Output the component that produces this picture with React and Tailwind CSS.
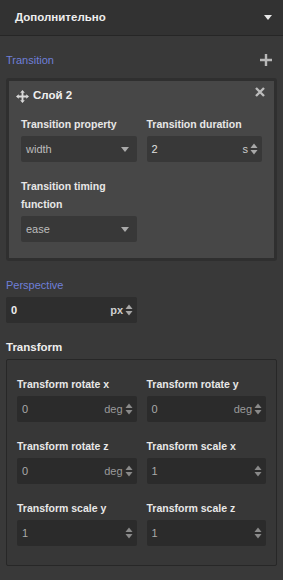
import React from "react";

function Spin({ dim }) {
  return (
    <svg width="8" height="12" viewBox="0 0 8 12" className={dim ? "text-[#8a8a8a]" : "text-[#a8a8a8]"}>
      <path d="M4 0.5 L7.5 5 L0.5 5 Z" fill="currentColor" />
      <path d="M4 11.5 L7.5 7 L0.5 7 Z" fill="currentColor" />
    </svg>
  );
}

function Caret({ color = "text-[#aaaaaa]" }) {
  return (
    <svg width="8" height="5" viewBox="0 0 8 5" className={color}>
      <path d="M0 0 L8 0 L4 5 Z" fill="currentColor" />
    </svg>
  );
}

function Field({ label, value, unit }) {
  return (
    <div className="flex flex-col">
      <div className="text-[10.5px] font-bold text-[#e8e8e8] leading-[18px] mb-[3px]">{label}</div>
      <div className="h-[26px] bg-[#2b2b2b] rounded-[2px] flex items-center pl-[5px] pr-[4px]">
        <span className="flex-1 text-[11px] text-[#a9a9a9]">{value}</span>
        {unit && <span className="text-[11px] text-[#9a9a9a] mr-[2px]">{unit}</span>}
        <Spin dim />
      </div>
    </div>
  );
}

export default function App() {
  return (
    <div
      className="w-[283px] h-[580px] bg-[#393939] text-[#e6e6e6] overflow-hidden"
      style={{ fontFamily: '"Liberation Sans", Arial, sans-serif' }}
    >
      <div className="h-[36px] bg-[#323232] border-b border-[#262626] flex items-center justify-between pl-[15px] pr-[11px]">
        <span className="text-[11.5px] font-bold text-[#eeeeee]">Дополнительно</span>
        <Caret color="text-[#e8e8e8]" />
      </div>

      <div className="px-[6px]">
        <div className="flex items-center justify-between h-[20px] mt-[14px] mb-[8px]">
          <span className="text-[11px] text-[#6f7fd8]">Transition</span>
          <svg width="12" height="12" viewBox="0 0 12 12" className="mr-[5px]">
            <path d="M6 0 V12 M0 6 H12" stroke="#b8b8b8" strokeWidth="2.4" />
          </svg>
        </div>

        <div className="border-[3px] border-[#2f2f2f] rounded-[3px] bg-[#474747] px-[12px] pt-[4px] pb-[16px]">
          <div className="flex items-center justify-between h-[22px]">
            <div className="flex items-center gap-[4px] -ml-[5px]">
              <svg width="13" height="13" viewBox="0 0 14 14" className="text-[#dcdcdc]">
                <path d="M7 0 L9.5 3 L4.5 3 Z M7 14 L9.5 11 L4.5 11 Z M0 7 L3 4.5 L3 9.5 Z M14 7 L11 4.5 L11 9.5 Z" fill="currentColor" />
                <path d="M7 2.5 V11.5 M2.5 7 H11.5" stroke="currentColor" strokeWidth="2" />
              </svg>
              <span className="text-[11.5px] font-bold text-[#f0f0f0]">Слой 2</span>
            </div>
            <svg width="10" height="10" viewBox="0 0 10 10" className="-mt-[8px] -mr-[3px]">
              <path d="M1 1 L9 9 M9 1 L1 9" stroke="#bdbdbd" strokeWidth="2.4" />
            </svg>
          </div>

          <div className="grid grid-cols-2 gap-x-[10px] mt-[8px]">
            <div className="flex flex-col">
              <div className="text-[10.5px] font-bold text-[#e8e8e8] leading-[18px] mb-[3px]">Transition property</div>
              <div className="h-[26px] bg-[#383838] rounded-[2px] flex items-center pl-[5px] pr-[8px]">
                <span className="flex-1 text-[11px] text-[#bdbdbd]">width</span>
                <Caret />
              </div>
            </div>
            <div className="flex flex-col">
              <div className="text-[10.5px] font-bold text-[#e8e8e8] leading-[18px] mb-[3px]">Transition duration</div>
              <div className="h-[26px] bg-[#383838] rounded-[2px] flex items-center pl-[5px] pr-[4px]">
                <span className="flex-1 text-[11px] text-[#e0e0e0]">2</span>
                <span className="text-[11px] text-[#cccccc] mr-[2px]">s</span>
                <Spin />
              </div>
            </div>
          </div>

          <div className="w-[116px] mt-[15px]">
            <div className="text-[10.5px] font-bold text-[#e8e8e8] leading-[18px] mb-[3px]">Transition timing function</div>
            <div className="h-[26px] bg-[#383838] rounded-[2px] flex items-center pl-[5px] pr-[8px]">
              <span className="flex-1 text-[11px] text-[#bdbdbd]">ease</span>
              <Caret />
            </div>
          </div>
        </div>

        <div className="text-[11px] text-[#6f7fd8] mt-[15px] leading-[18px]">Perspective</div>
        <div className="w-[131px] h-[26px] bg-[#2e2e2e] rounded-[2px] flex items-center pl-[5px] pr-[4px] mt-[3px]">
          <span className="flex-1 text-[11px] font-bold text-[#eeeeee]">0</span>
          <span className="text-[11px] font-bold text-[#d0d0d0] mr-[2px]">px</span>
          <Spin />
        </div>

        <div className="text-[11.5px] font-bold text-[#eeeeee] mt-[15px] leading-[18px]">Transform</div>
        <div className="mt-[3px] border border-[#272727] rounded-[2px] bg-[#373737] px-[10px] pt-[15px] pb-[19px] grid grid-cols-2 gap-x-[10px] gap-y-[15px]">
          <Field label="Transform rotate x" value="0" unit="deg" />
          <Field label="Transform rotate y" value="0" unit="deg" />
          <Field label="Transform rotate z" value="0" unit="deg" />
          <Field label="Transform scale x" value="1" />
          <Field label="Transform scale y" value="1" />
          <Field label="Transform scale z" value="1" />
        </div>
      </div>
    </div>
  );
}
